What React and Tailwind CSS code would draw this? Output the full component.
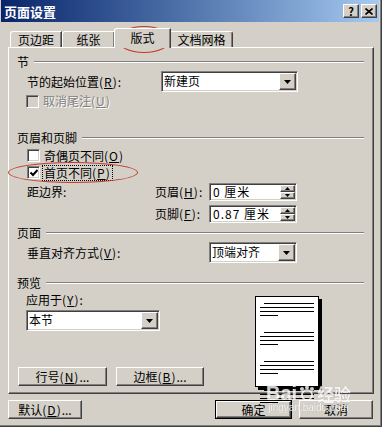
import React from 'react';

// Win2000-style "页面设置" dialog, 版式 tab
const raised =
  'border border-t-white border-l-white border-r-[#404040] border-b-[#404040] shadow-[inset_-1px_-1px_0_#808080]';
const sunken =
  'border border-t-[#808080] border-l-[#808080] border-r-white border-b-white shadow-[inset_1px_1px_0_#404040,inset_-1px_-1px_0_#d4d0c8]';

const Acc = ({ k }) => (
  <span className="tracking-[1px]">
    (<span className="underline underline-offset-1">{k}</span>)
  </span>
);

const DownArrow = () => (
  <svg width="7" height="4" viewBox="0 0 7 4">
    <polygon points="0,0 7,0 3.5,4" fill="#000" />
  </svg>
);

const Dropdown = ({ text, className }) => (
  <div className={`flex h-[21px] bg-white ${sunken} ${className}`}>
    <div className="flex-1 pl-[2px] pt-[1px] leading-[16px]">{text}</div>
    <div className={`m-[1px] flex w-[17px] items-center justify-center bg-[#d4d0c8] ${raised}`}>
      <DownArrow />
    </div>
  </div>
);

const Spinner = ({ text }) => (
  <div className={`flex h-[18px] w-[88px] bg-white ${sunken}`}>
    <div className="flex-1 pl-[3px] leading-[15px] tracking-[1px]">{text}</div>
    <div className="m-[1px] flex w-[15px] flex-col">
      <div className={`flex h-[7px] items-center justify-center bg-[#d4d0c8] ${raised}`}>
        <svg width="5" height="3" viewBox="0 0 5 3">
          <polygon points="2.5,0 5,3 0,3" fill="#000" />
        </svg>
      </div>
      <div className={`flex h-[7px] items-center justify-center bg-[#d4d0c8] ${raised}`}>
        <svg width="5" height="3" viewBox="0 0 5 3">
          <polygon points="0,0 5,0 2.5,3" fill="#000" />
        </svg>
      </div>
    </div>
  </div>
);

const Checkbox = ({ checked, disabled }) => (
  <div
    className={`flex h-[13px] w-[13px] shrink-0 items-center justify-center ${sunken} ${
      disabled ? 'bg-[#d4d0c8]' : 'bg-white'
    }`}
  >
    {checked && (
      <svg width="8" height="8" viewBox="0 0 8 8">
        <polyline points="0.5,3.5 3,6 7.5,1" fill="none" stroke="#000" strokeWidth="2" />
      </svg>
    )}
  </div>
);

const Section = ({ title, className }) => (
  <div className={`flex items-center ${className}`}>
    <span className="pr-[5px]">{title}</span>
    <div className="h-[2px] flex-1 border-t border-b border-t-[#808080] border-b-white" />
  </div>
);

const Button = ({ children, className, isDefault }) =>
  isDefault ? (
    <div className={`border border-black ${className}`}>
      <div className={`flex h-full items-center justify-center ${raised}`}>{children}</div>
    </div>
  ) : (
    <div className={`flex items-center justify-center ${raised} ${className}`}>{children}</div>
  );

const PreviewPage = () => {
  const groups = [0, 1, 2, 3];
  return (
    <div className="relative mt-[4px] h-[91px] w-[64px] border border-black bg-white shadow-[3px_3px_0_#000]">
      <div className="flex flex-col gap-[16px] pl-[4px] pt-[6px]">
        {groups.map((g) => (
          <div key={g} className="flex flex-col gap-[3px]">
            <div className="ml-[4px] h-[1px] w-[50px] bg-black" />
            <div className="h-[1px] w-[54px] bg-black" />
            <div className="h-[1px] w-[54px] bg-black" />
            <div className="h-[1px] w-[18px] bg-black" />
          </div>
        ))}
      </div>
    </div>
  );
};

export default function App() {
  return (
    <div
      className="relative h-[431px] w-[384px] overflow-hidden bg-white text-[12px] leading-none text-black"
      style={{ fontFamily: '"Noto Sans CJK SC", "Liberation Sans", sans-serif' }}
    >
      <div className="h-[427px] w-[382px] border-r border-b border-r-[#404040] border-b-[#404040] bg-[#d4d0c8] shadow-[inset_-1px_-1px_0_#808080]">
        {/* Title bar */}
        <div className="ml-[1px] flex h-[22px] w-[378px] items-center bg-gradient-to-r from-[#0a246a] to-[#a6caf0] pl-[3px] pr-[2px]">
          <span className="flex-1 text-[13px] font-bold text-white">页面设置</span>
          <div className={`mr-[2px] flex h-[14px] w-[16px] items-center justify-center bg-[#d4d0c8] text-[11px] font-bold ${raised}`}>
            ?
          </div>
          <div className={`flex h-[14px] w-[16px] items-center justify-center bg-[#d4d0c8] ${raised}`}>
            <svg width="8" height="7" viewBox="0 0 8 7">
              <path d="M0.5 0.5 L7.5 6.5 M7.5 0.5 L0.5 6.5" stroke="#000" strokeWidth="1.6" />
            </svg>
          </div>
        </div>

        {/* Tabs */}
        <div className="flex h-[25px] items-end pl-[10px]">
          <div className="flex h-[16px] w-[52px] items-center justify-center rounded-tl-[3px] border-t border-l border-r border-t-white border-l-white border-r-[#404040] shadow-[inset_-1px_0_0_#808080]">
            页边距
          </div>
          <div className="flex h-[16px] w-[53px] items-center justify-center rounded-tl-[3px] border-t border-l border-r border-t-white border-l-white border-r-[#404040] shadow-[inset_-1px_0_0_#808080]">
            纸张
          </div>
          <div className="relative z-10 -mb-[1px] -ml-[1px] flex h-[20px] w-[57px] items-center justify-center rounded-tl-[3px] border-t border-l border-r border-t-white border-l-white border-r-[#404040] bg-[#d4d0c8] pb-[2px] shadow-[inset_-1px_0_0_#808080]">
            版式
          </div>
          <div className="flex h-[16px] w-[62px] items-center justify-center rounded-tr-[3px] border-t border-r border-t-white border-r-[#404040] shadow-[inset_-1px_0_0_#808080]">
            文档网格
          </div>
        </div>

        {/* Tab panel */}
        <div className="ml-[8px] h-[347px] w-[366px] border border-t-white border-l-white border-r-[#404040] border-b-[#404040] px-[8px] pt-[5px] shadow-[inset_-1px_-1px_0_#808080]">
          <Section title="节" className="h-[18px] pr-[1px]" />
          <div className="flex h-[21px] items-center pl-[10px]">
            <span className="w-[134px]">
              节的起始位置<Acc k="R" />:
            </span>
            <Dropdown text="新建页" className="w-[137px]" />
          </div>
          <div className="flex h-[18px] items-center gap-[4px] pl-[9px] text-[#808080] [text-shadow:1px_1px_0_#fff]">
            <Checkbox disabled />
            <span>
              取消尾注<Acc k="U" />
            </span>
          </div>

          <Section title="页眉和页脚" className="mt-[19px] h-[18px] pr-[1px]" />
          <div className="flex h-[17px] items-center gap-[4px] pl-[10px]">
            <Checkbox />
            <span>
              奇偶页不同<Acc k="O" />
            </span>
          </div>
          <div className="flex h-[17px] items-center gap-[2px] pl-[10px]">
            <Checkbox checked />
            <span className="border border-dotted border-black px-[1px] py-[1px]">
              首页不同<Acc k="P" />
            </span>
          </div>
          <div className="mt-[2px] flex h-[18px] items-center pl-[10px]">
            <span className="w-[128px]">距边界:</span>
            <span className="w-[54px]">
              页眉<Acc k="H" />:
            </span>
            <Spinner text="0 厘米" />
          </div>
          <div className="mt-[4px] flex h-[18px] items-center pl-[10px]">
            <span className="w-[128px]" />
            <span className="w-[54px]">
              页脚<Acc k="F" />:
            </span>
            <Spinner text="0.87 厘米" />
          </div>

          <Section title="页面" className="mt-[1px] h-[18px] pr-[1px]" />
          <div className="flex h-[21px] items-center pl-[10px]">
            <span className="w-[182px]">
              垂直对齐方式<Acc k="V" />:
            </span>
            <Dropdown text="顶端对齐" className="w-[88px]" />
          </div>

          <Section title="预览" className="mt-[11px] h-[18px] pr-[1px]" />
          <div className="flex">
            <div className="flex w-[238px] flex-col">
              <div className="flex h-[16px] items-center pl-[9px]">
                应用于<Acc k="Y" />:
              </div>
              <Dropdown text="本节" className="mt-[2px] ml-[9px] w-[134px]" />
              <div className="mt-[36px] flex gap-[9px] pl-[1px]">
                <Button className="h-[19px] w-[89px]">
                  行号<Acc k="N" />...
                </Button>
                <Button className="h-[19px] w-[88px]">
                  边框<Acc k="B" />...
                </Button>
              </div>
            </div>
            <PreviewPage />
          </div>
        </div>

        {/* Bottom buttons */}
        <div className="mt-[6px] flex pl-[8px]">
          <Button className="h-[19px] w-[74px]">
            默认<Acc k="D" />...
          </Button>
          <div className="flex-1" />
          <Button isDefault className="h-[19px] w-[77px]">
            确定
          </Button>
          <Button className="ml-[7px] mr-[8px] h-[19px] w-[74px]">取消</Button>
        </div>
      </div>

      {/* Red annotation ellipses */}
      <div className="pointer-events-none absolute left-[117px] top-[26px] h-[27px] w-[54px] rounded-[50%] border border-[#c0392b]" />
      <div className="pointer-events-none absolute left-[8px] top-[162px] h-[21px] w-[130px] rounded-[50%] border border-[#c0392b]" />

      {/* Watermark */}
      <div className="pointer-events-none absolute left-[266px] top-[383px] flex flex-col items-center text-white opacity-80 [text-shadow:0_0_1px_#999]">
        <div className="flex items-center gap-[2px]">
          <span className="text-[20px] font-bold" style={{ fontFamily: '"Liberation Sans", sans-serif' }}>
            Bai
          </span>
          <svg width="16" height="16" viewBox="0 0 16 16">
            <circle cx="8" cy="10" r="5" fill="none" stroke="#fff" strokeWidth="2" />
            <circle cx="3" cy="4" r="2" fill="#fff" />
            <circle cx="8" cy="2.5" r="2" fill="#fff" />
            <circle cx="13" cy="4" r="2" fill="#fff" />
          </svg>
          <span className="text-[17px] font-bold">经验</span>
        </div>
        <span className="text-[10px]" style={{ fontFamily: '"Liberation Sans", sans-serif' }}>
          jingyan.baidu.com
        </span>
      </div>
    </div>
  );
}
